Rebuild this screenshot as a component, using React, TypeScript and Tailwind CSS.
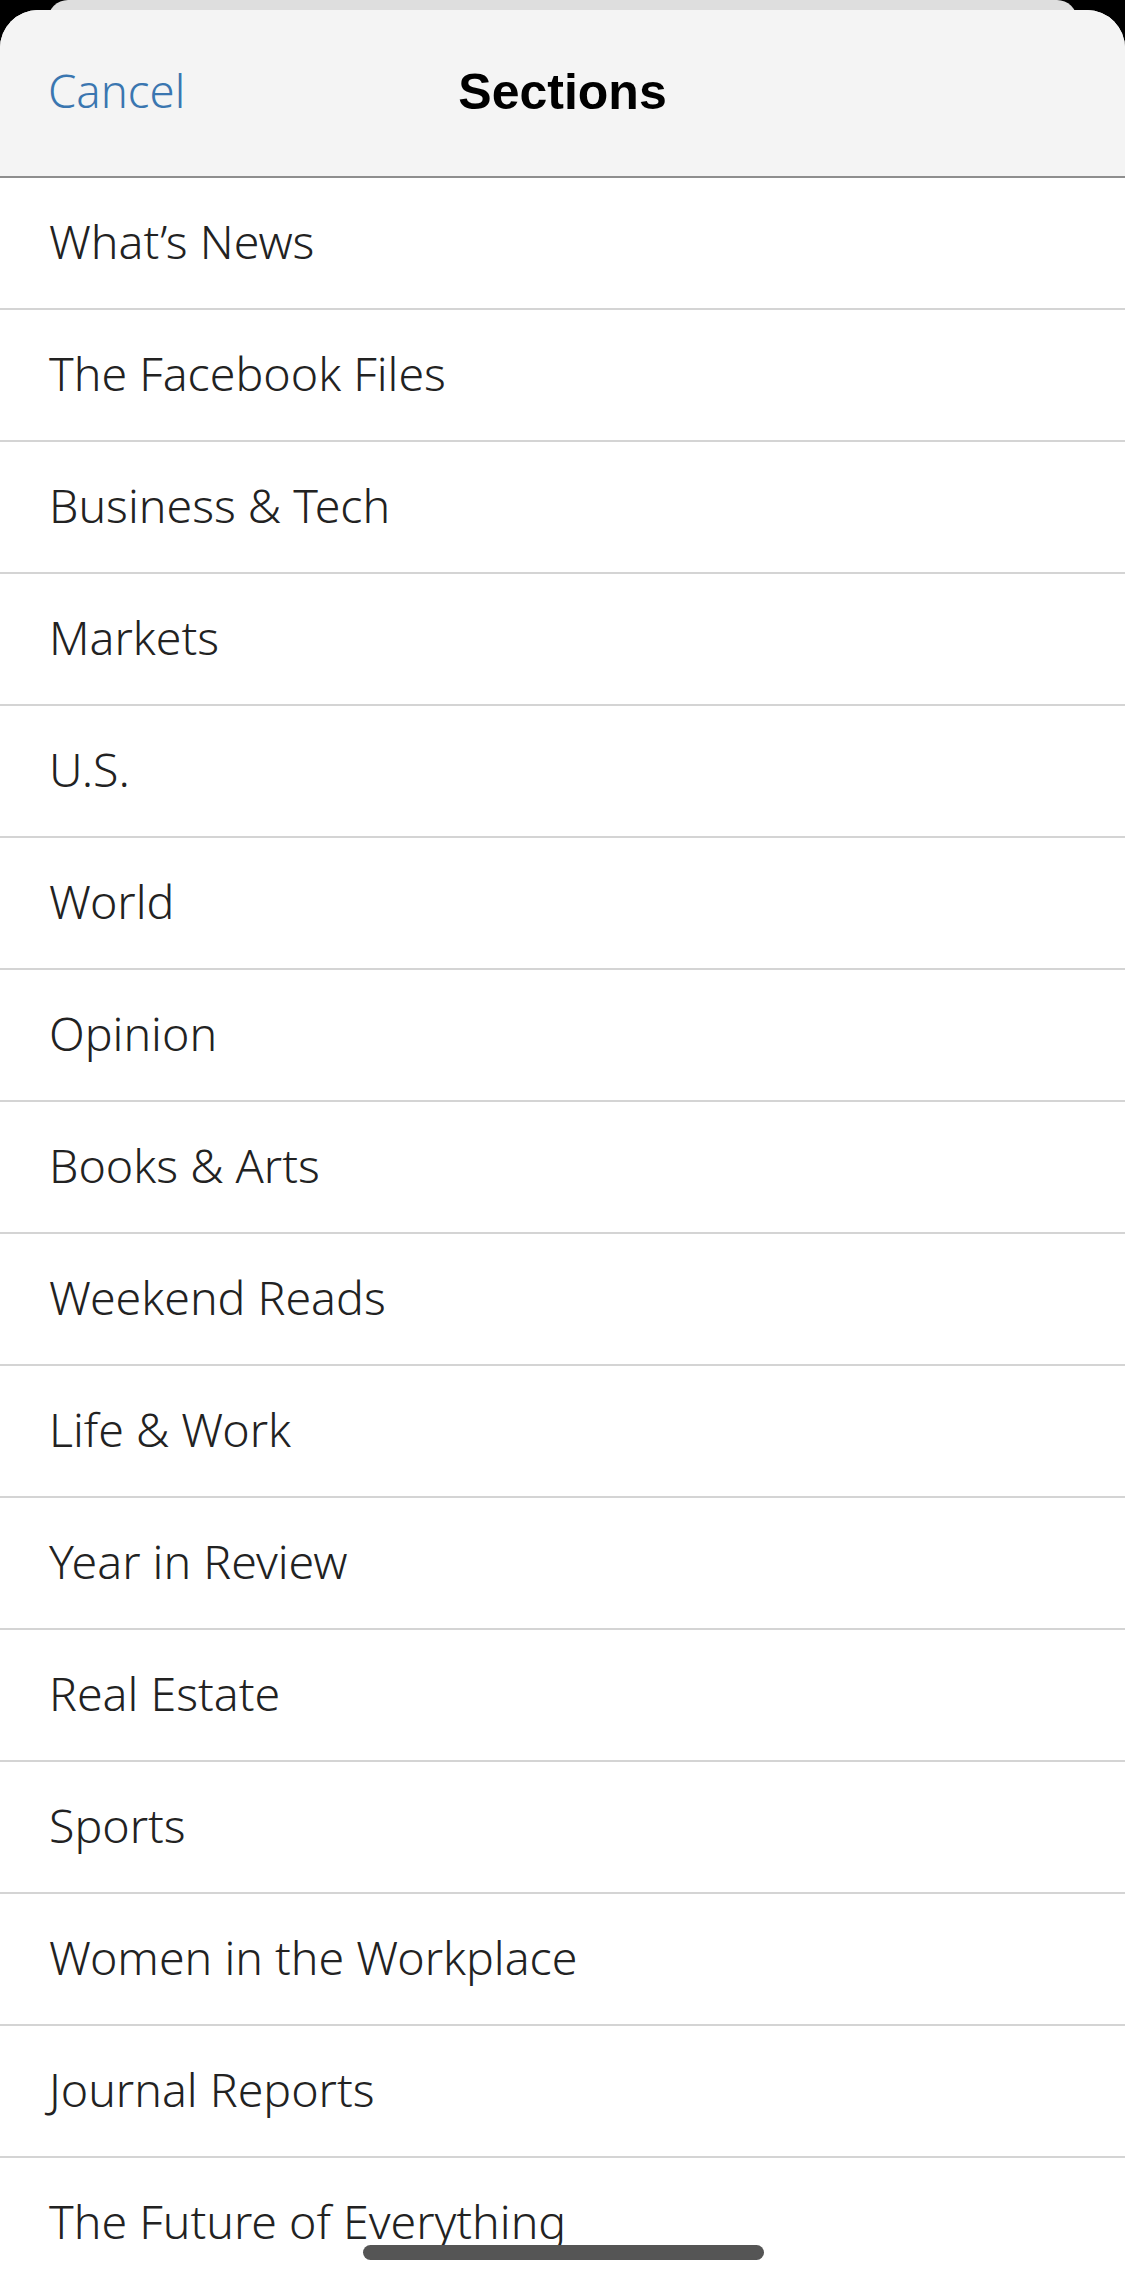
const sections = [
  "What’s News",
  "The Facebook Files",
  "Business & Tech",
  "Markets",
  "U.S.",
  "World",
  "Opinion",
  "Books & Arts",
  "Weekend Reads",
  "Life & Work",
  "Year in Review",
  "Real Estate",
  "Sports",
  "Women in the Workplace",
  "Journal Reports",
  "The Future of Everything",
];

export default function App() {
  return (
    <div className="relative h-[2284px] w-[1125px] overflow-hidden bg-black">
      {/* sheet peeking behind */}
      <div className="mx-[48px] h-[20px] rounded-t-[30px] bg-[#dedede]" />

      {/* main sheet */}
      <div className="absolute inset-x-0 top-[10px] bottom-0 overflow-hidden rounded-t-[38px] bg-white">
        <header className="relative flex h-[168px] items-center justify-center border-b-2 border-[#8e8e8e] bg-[#f4f4f4]">
          <button className="absolute left-[48px] top-[58px] text-[45.5px] leading-none text-[#3a76b0] font-['Noto_Sans',sans-serif] font-light">
            Cancel
          </button>
          <h1 className="mt-[-2px] text-[50px] font-bold text-black font-['Liberation_Sans',Arial,sans-serif]">
            Sections
          </h1>
        </header>

        <ul className="font-['Noto_Sans',sans-serif]">
          {sections.map((name) => (
            <li
              key={name}
              className="flex h-[132px] items-center border-b-2 border-[#d4d4d4] pb-[3px] pl-[49px] text-[46.5px] font-light text-[#222222]"
            >
              {name}
            </li>
          ))}
        </ul>
      </div>

      {/* home indicator */}
      <div className="absolute bottom-[24px] left-[363px] h-[15px] w-[401px] rounded-full bg-[#555555]" />
    </div>
  );
}
